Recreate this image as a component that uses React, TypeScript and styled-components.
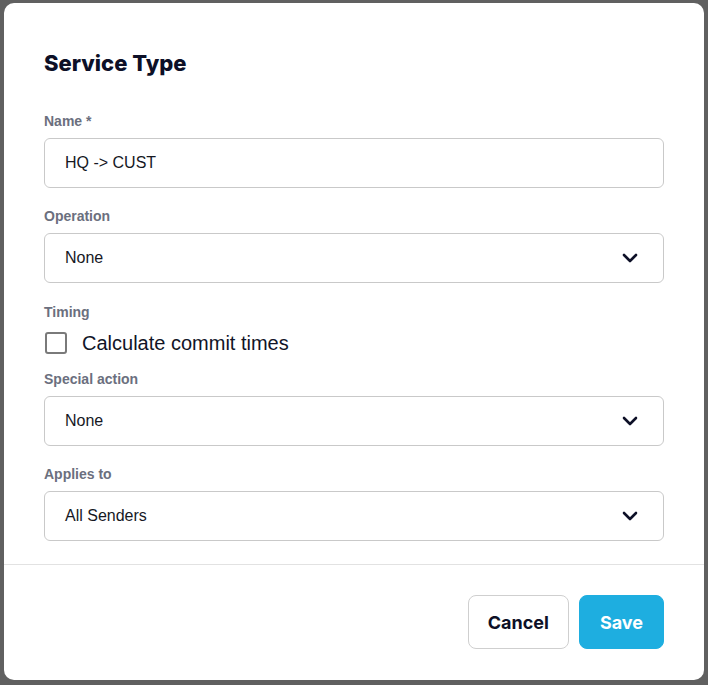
import * as React from 'react';
import styled, { createGlobalStyle } from 'styled-components';

const GlobalStyle = createGlobalStyle`
  html, body {
    margin: 0;
    padding: 0;
    background: #606060;
    font-family: Inter, Roboto, "Liberation Sans", Arial, sans-serif;
  }
  * { box-sizing: border-box; }
`;

const Backdrop = styled.div`
  width: 708px;
  height: 685px;
  padding: 3px 4px 0 4px;
`;

const Dialog = styled.div`
  width: 700px;
  height: 677px;
  background: #ffffff;
  border-radius: 10px;
  display: flex;
  flex-direction: column;
  overflow: hidden;
`;

const Body = styled.div`
  padding: 47px 40px 23px 40px;
  display: flex;
  flex-direction: column;
`;

const Title = styled.h2`
  margin: 0 0 37px 0;
  font-family: Inter, Roboto, sans-serif;
  font-size: 22px;
  line-height: 26px;
  font-weight: 800;
  color: #0d1027;
`;

const Field = styled.div<{ $gap?: number }>`
  display: flex;
  flex-direction: column;
  margin-bottom: ${(p) => (p.$gap ?? 20)}px;
`;

const Label = styled.label`
  font-family: "Liberation Sans", Arial, sans-serif;
  font-size: 14px;
  line-height: 16px;
  font-weight: 700;
  color: #6b6f7e;
  margin-bottom: 9px;
`;

const Input = styled.div`
  height: 50px;
  border: 1px solid #c9c9c9;
  border-radius: 6px;
  padding: 0 25px 0 20px;
  display: flex;
  align-items: center;
  justify-content: space-between;
  font-family: "Liberation Sans", Arial, sans-serif;
  font-size: 16px;
  color: #16181f;
`;

const CheckRow = styled.div`
  display: flex;
  align-items: center;
  gap: 15px;
  height: 26px;
  margin-top: 1px;
  font-family: "Liberation Sans", Arial, sans-serif;
  font-size: 20px;
  color: #111427;
`;

const Box = styled.span`
  width: 22px;
  height: 22px;
  margin-left: 1px;
  border: 2px solid #7a7a7a;
  border-radius: 3px;
`;

const Footer = styled.div`
  border-top: 1px solid #e2e2e2;
  padding: 30px 40px;
  display: flex;
  justify-content: flex-end;
  gap: 10px;
`;

const Button = styled.button<{ $primary?: boolean }>`
  height: 54px;
  padding: 0 ${(p) => (p.$primary ? 20 : 19)}px;
  border-radius: 8px;
  border: 1px solid ${(p) => (p.$primary ? '#1eaee0' : '#cfcfcf')};
  background: ${(p) => (p.$primary ? '#1eaee0' : '#ffffff')};
  color: ${(p) => (p.$primary ? '#ffffff' : '#0d1027')};
  font-family: Inter, Roboto, sans-serif;
  font-size: 18px;
  font-weight: 700;
`;

const Chevron = () => (
  <svg width="16" height="10" viewBox="0 0 16 10" fill="none">
    <path d="M2 2l6 6 6-6" stroke="#0d1027" strokeWidth="2.6" strokeLinecap="round" strokeLinejoin="round" />
  </svg>
);

const Select = ({ value }: { value: string }) => (
  <Input>
    <span>{value}</span>
    <Chevron />
  </Input>
);

export default function App() {
  return (
    <>
      <GlobalStyle />
      <Backdrop>
        <Dialog>
          <Body>
            <Title>Service Type</Title>
            <Field>
              <Label>Name *</Label>
              <Input>HQ -&gt; CUST</Input>
            </Field>
            <Field $gap={21}>
              <Label>Operation</Label>
              <Select value="None" />
            </Field>
            <Field $gap={15}>
              <Label>Timing</Label>
              <CheckRow>
                <Box />
                <span>Calculate commit times</span>
              </CheckRow>
            </Field>
            <Field $gap={20}>
              <Label>Special action</Label>
              <Select value="None" />
            </Field>
            <Field $gap={0}>
              <Label>Applies to</Label>
              <Select value="All Senders" />
            </Field>
          </Body>
          <Footer>
            <Button>Cancel</Button>
            <Button $primary>Save</Button>
          </Footer>
        </Dialog>
      </Backdrop>
    </>
  );
}
